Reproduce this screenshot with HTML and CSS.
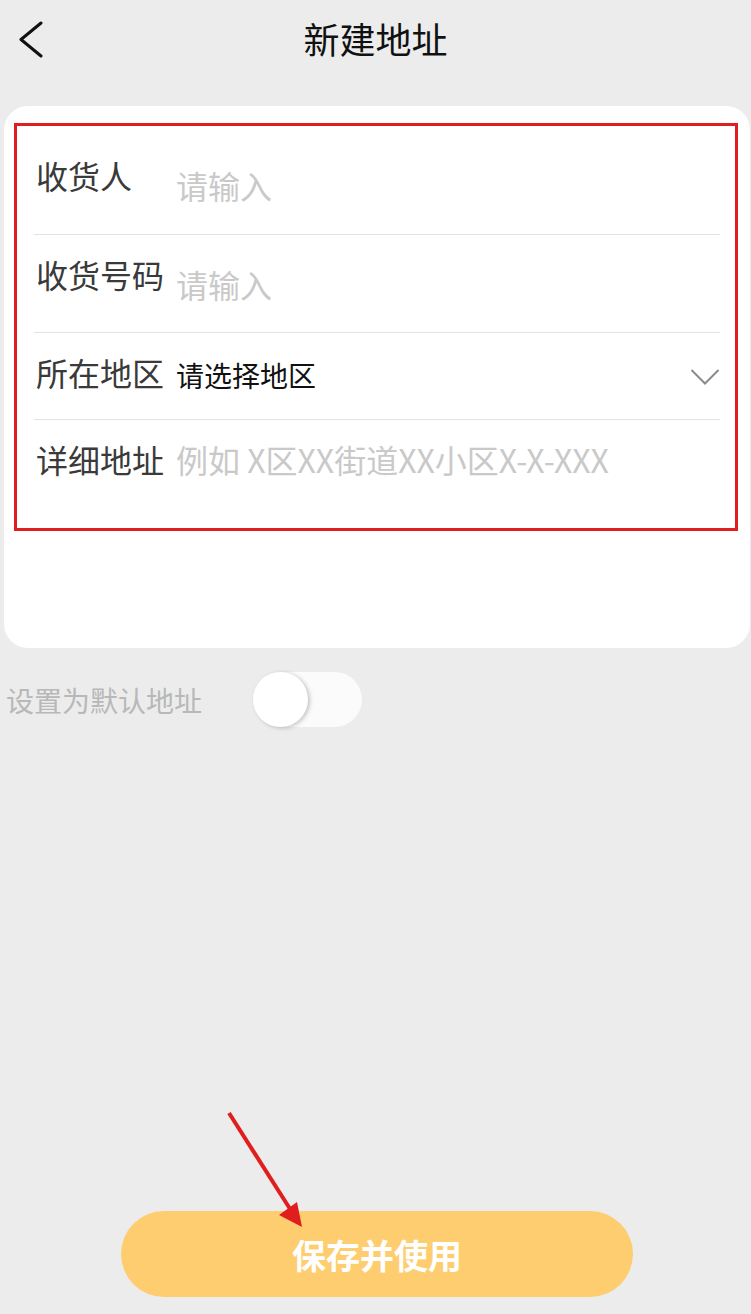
FILE: index.html
```html
<!DOCTYPE html>
<html lang="zh-CN">
<head>
<meta charset="utf-8">
<title>新建地址</title>
<link rel="stylesheet" href="styles.css">
</head>
<body>
<div class="page">
  <header class="topbar">
    <span class="back">
      <svg width="26" height="38" viewBox="0 0 26 38"><path d="M23 3 L3 19.5 L23 36" fill="none" stroke="#111" stroke-width="3" stroke-linecap="round" stroke-linejoin="round"/></svg>
    </span>
    <h1 class="title">新建地址</h1>
    <span></span>
  </header>

  <section class="card">
    <div class="form">
      <div class="row row-1">
        <span class="label">收货人</span>
        <span class="value placeholder low">请输入</span>
      </div>
      <div class="sep"></div>
      <div class="row row-2">
        <span class="label">收货号码</span>
        <span class="value placeholder low">请输入</span>
      </div>
      <div class="sep"></div>
      <div class="row row-3">
        <span class="label">所在地区</span>
        <span class="value select">请选择地区</span>
        <svg class="chev" width="30" height="18" viewBox="0 0 30 18"><path d="M1.5 2 L15 15.5 L28.5 2" fill="none" stroke="#8a8a8a" stroke-width="2"/></svg>
      </div>
      <div class="sep"></div>
      <div class="row row-4">
        <span class="label">详细地址</span>
        <span class="value placeholder">例如 X区XX街道XX小区X-X-XXX</span>
      </div>
    </div>
  </section>

  <div class="default-row">
    <span class="default-text">设置为默认地址</span>
    <span class="switch"><span class="knob"></span></span>
  </div>

  <div class="footer">
    <button class="save">保存并使用</button>
  </div>

  <svg class="arrow" width="90" height="130" viewBox="0 0 90 130">
    <line x1="9" y1="8" x2="72" y2="107" stroke="#e01e1e" stroke-width="4"/>
    <polygon points="59,110 77,97 82,122" fill="#e01e1e"/>
  </svg>
</div>
</body>
</html>
```

FILE: styles.css
```css
html, body {
  margin: 0;
  padding: 0;
  background: #ececec;
}

body {
  font-family: "Noto Sans CJK SC", "Noto Sans", sans-serif;
}

.page {
  position: relative;
  min-height: 1314px;
  display: flex;
  flex-direction: column;
}

.topbar {
  height: 76px;
  display: grid;
  grid-template-columns: 1fr auto 1fr;
  align-items: center;
}

.back {
  display: flex;
  padding-left: 18px;
  padding-top: 2px;
}

.title {
  margin: 0;
  font-size: 36px;
  font-weight: normal;
  line-height: 76px;
  color: #111;
}

.card {
  margin: 30px 1px 0 4px;
  height: 542px;
  box-sizing: border-box;
  background: #fff;
  border-radius: 24px;
  padding: 17px 12px 0 10px;
}

.form {
  height: 408px;
  box-sizing: border-box;
  border: 3px solid #e01e1e;
  padding-top: 10px;
  display: flex;
  flex-direction: column;
}

.row {
  display: flex;
  align-items: flex-start;
  padding: 20px 15px 0 19px;
  box-sizing: border-box;
}

.row-1 { height: 98px; }
.row-2 { height: 97px; }
.row-3 { height: 86px; }
.row-4 { flex: 1; }

.label {
  width: 140px;
  flex-shrink: 0;
  font-size: 32px;
  line-height: 38px;
  color: #3a3a3a;
  white-space: nowrap;
}

.value {
  font-size: 32px;
  line-height: 38px;
  white-space: nowrap;
}

.placeholder {
  color: #c9c9c9;
}

.low {
  margin-top: 10px;
}

.select {
  font-size: 28px;
  color: #111;
  margin-top: 3px;
}

.chev {
  margin-left: auto;
  margin-top: 15px;
}

.sep {
  height: 1px;
  background: #e3e3e3;
  margin: 0 15px 0 17px;
}

.default-row {
  margin-top: 24px;
  height: 55px;
  display: flex;
  align-items: center;
  padding-left: 6px;
}

.default-text {
  width: 196px;
  font-size: 28px;
  color: #b8b8b8;
  white-space: nowrap;
  margin-right: 51px;
}

.switch {
  width: 109px;
  height: 55px;
  border-radius: 28px;
  background: #fbfbfb;
  display: flex;
}

.knob {
  width: 55px;
  height: 55px;
  border-radius: 50%;
  background: #fff;
  box-shadow: 2px 1px 4px rgba(0, 0, 0, 0.22);
}

.footer {
  margin-top: auto;
  padding: 0 118px 17px 121px;
}

.save {
  display: block;
  width: 512px;
  height: 86px;
  border: none;
  border-radius: 43px;
  background: #fecd70;
  color: #fff;
  font-family: "Noto Sans CJK SC", "Noto Sans", sans-serif;
  font-size: 34px;
  font-weight: bold;
  padding: 0;
}

.arrow {
  position: absolute;
  left: 220px;
  top: 1105px;
}
```
